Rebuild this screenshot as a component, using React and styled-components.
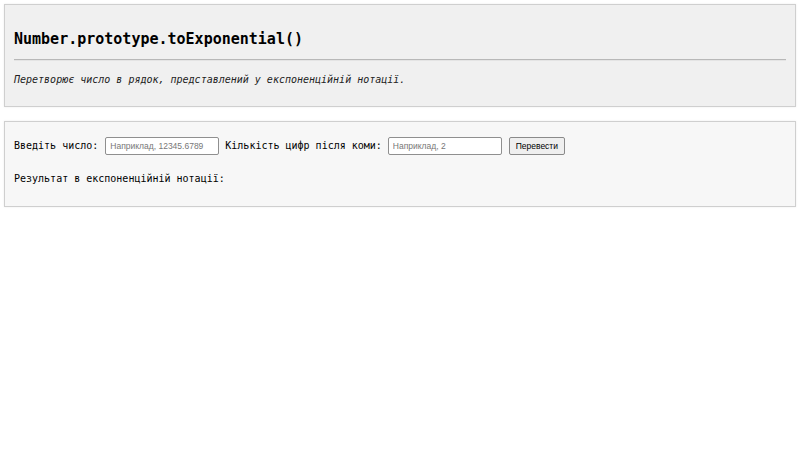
import React from "react";
import styled, { createGlobalStyle } from "styled-components";

const GlobalStyle = createGlobalStyle`
  html, body {
    margin: 0;
    padding: 0;
    background: #ffffff;
    color: #000000;
    font-family: "DejaVu Sans Mono", "Liberation Mono", monospace;
  }
`;

const Page = styled.div`
  display: flex;
  flex-direction: column;
  gap: 14px;
  padding: 4px;
`;

const Panel = styled.section`
  background: ${(p) => (p.light ? "#f7f7f7" : "#f0f0f0")};
  border: 1px solid #cfcfcf;
  box-shadow: 0 0 2px rgba(0, 0, 0, 0.08);
  padding: 9px;
`;

const Title = styled.h1`
  margin: 16px 0 11px;
  font-size: 15px;
  line-height: 18px;
  font-weight: bold;
`;

const Divider = styled.hr`
  margin: 0 0 12px;
  border: 0;
  border-top: 1px solid #b8b8b8;
  border-bottom: 1px solid #e4e4e4;
`;

const Description = styled.p`
  margin: 0 0 10px;
  font-size: 10px;
  line-height: 14px;
  font-style: italic;
  color: #222;
`;

const Row = styled.div`
  display: flex;
  align-items: center;
  gap: 6px;
  margin-top: 6px;
  height: 18px;
`;

const Label = styled.label`
  font-size: 10px;
  line-height: 14px;
  margin-right: ${(p) => (p.wide ? "1px" : "0")};
`;

const Input = styled.input`
  box-sizing: border-box;
  width: 114px;
  height: 18px;
  padding: 0 4px;
  border: 1px solid #8f8f8f;
  border-radius: 2px;
  background: #fff;
  font-family: "Liberation Sans", Arial, sans-serif;
  font-size: 8.5px;

  &::placeholder {
    color: #777;
  }
`;

const Button = styled.button`
  box-sizing: border-box;
  height: 18px;
  width: 56px;
  margin-left: 1px;
  padding: 0;
  border: 1px solid #8a8a8a;
  border-radius: 2px;
  background: #efefef;
  font-family: "Liberation Sans", Arial, sans-serif;
  font-size: 8.5px;
  color: #000;
`;

const Result = styled.p`
  margin: 17px 0 11px;
  font-size: 10px;
  line-height: 14px;
`;

export default function App() {
  return (
    <Page>
      <GlobalStyle />
      <Panel>
        <Title>Number.prototype.toExponential()</Title>
        <Divider />
        <Description>
          Перетворює число в рядок, представлений у експоненційній нотації.
        </Description>
      </Panel>
      <Panel light>
        <Row>
          <Label wide>Введіть число:</Label>
          <Input placeholder="Наприклад, 12345.6789" />
          <Label>Кількість цифр після коми:</Label>
          <Input placeholder="Наприклад, 2" />
          <Button>Перевести</Button>
        </Row>
        <Result>Результат в експоненційній нотації:</Result>
      </Panel>
    </Page>
  );
}
